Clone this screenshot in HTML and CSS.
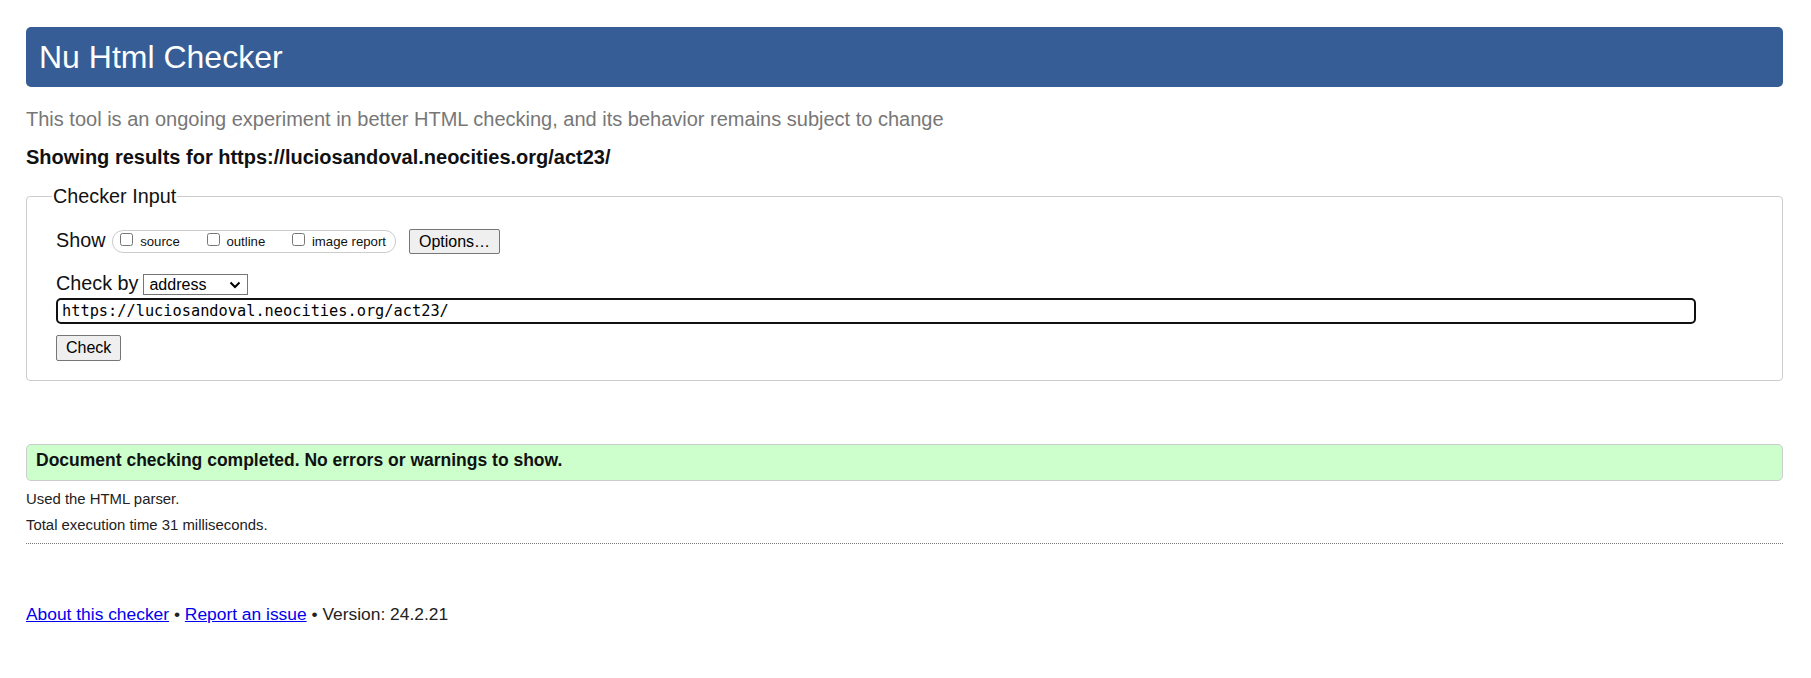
FILE: index.html
```html
<!DOCTYPE html>
<html lang="en">
<head>
<meta charset="utf-8">
<title>Nu Html Checker</title>
<link rel="stylesheet" href="styles.css">
</head>
<body>
<header class="masthead"><h1 class="title">Nu Html Checker</h1></header>
<p class="tagline">This tool is an ongoing experiment in better HTML checking, and its behavior remains subject to change</p>
<p class="results-for">Showing results for https://luciosandoval.neocities.org/act23/</p>
<form class="checker-form">
<fieldset class="checker">
<legend class="checker-legend">Checker Input</legend>
<div class="show-row">
<span class="show-label">Show</span>
<div class="show-opts"><label class="opt"><input type="checkbox" class="cb"> source</label><label class="opt"><input type="checkbox" class="cb"> outline</label><label class="opt last"><input type="checkbox" class="cb"> image report</label></div>
<button type="button" class="btn btn-options">Options…</button>
</div>
<div class="by-row">
<span class="by-label">Check by</span>
<span class="select-wrap"><select class="by-select"><option>address</option></select><svg class="chev" width="12" height="8" viewBox="0 0 12 8" aria-hidden="true"><path d="M1.5 1.5 L6 6 L10.5 1.5" fill="none" stroke="#000" stroke-width="2"/></svg></span>
</div>
<input class="url" type="text" value="https://luciosandoval.neocities.org/act23/">
<div class="submit-row"><button type="button" class="btn btn-check">Check</button></div>
</fieldset>
</form>
<div class="success">Document checking completed. No errors or warnings to show.</div>
<p class="meta first">Used the HTML parser.</p>
<p class="meta">Total execution time 31 milliseconds.</p>
<hr class="sep">
<p class="footer"><a class="flink" href="#">About this checker</a> • <a class="flink" href="#">Report an issue</a> • Version: 24.2.21</p>
</body>
</html>
```
FILE: styles.css
```css
html, body {
  background: #fff;
}
body {
  margin: 0;
  padding: 27px 28px 0 26px;
  font-family: "Liberation Sans", Arial, sans-serif;
  color: #111;
}
.masthead {
  height: 60px;
  background: #365d95;
  border-radius: 5px;
  display: flex;
  align-items: center;
  padding-left: 13px;
}
.title {
  margin: 0;
  font-size: 32px;
  font-weight: normal;
  line-height: 60px;
  color: #fff;
}
.tagline {
  margin: 20px 0 0;
  font-size: 20px;
  line-height: 24px;
  color: #777;
}
.results-for {
  margin: 14px 0 0;
  font-size: 20px;
  line-height: 24px;
  font-weight: bold;
}
.checker-form {
  margin: 15px 0 0;
}
.checker {
  margin: 0;
  padding: 21px 30px 19px 29px;
  border: 1px solid #ccc;
  border-radius: 4px;
  min-width: 0;
}
.checker-legend {
  font-size: 19.8px;
  line-height: 24px;
  padding: 0 1px;
  margin-left: -4px;
}
.show-row {
  display: flex;
  align-items: flex-start;
  height: 25px;
}
.show-label {
  font-size: 19.8px;
  line-height: 24px;
  margin-top: -1px;
}
.show-opts {
  height: 21px;
  margin: 1px 0 0 7px;
  padding: 0 9px 0 3px;
  border: 1px solid #ccc;
  border-radius: 11px;
  font-size: 13.2px;
  line-height: 21px;
  white-space: nowrap;
}
.opt {
  margin-right: 23px;
}
.opt.last {
  margin-right: 0;
}
.cb {
  width: 13px;
  height: 13px;
  margin: 0 3px 3px 4px;
  vertical-align: baseline;
}
.btn {
  font-family: "Liberation Sans", Arial, sans-serif;
  font-size: 16px;
  padding: 0 9px;
  border: 1px solid #767676;
  border-radius: 2px;
  background: #efefef;
  color: #000;
}
.btn-options {
  height: 25px;
  margin-left: 13px;
}
.btn-check {
  height: 26px;
}
.by-row {
  display: flex;
  align-items: flex-start;
  margin-top: 17px;
}
.by-label {
  font-size: 19.8px;
  line-height: 24px;
}
.select-wrap {
  position: relative;
  display: block;
  margin: 3px 0 0 5px;
  height: 21px;
}
.by-select {
  display: block;
  appearance: none;
  -webkit-appearance: none;
  margin: 0;
  width: 105px;
  height: 21px;
  padding: 0 0 0 5px;
  font-family: "Liberation Sans", Arial, sans-serif;
  font-size: 16px;
  border: 1px solid #767676;
  border-radius: 0;
  background: #fff;
  color: #000;
}
.chev {
  position: absolute;
  left: 86px;
  top: 7px;
  pointer-events: none;
}
.url {
  display: block;
  box-sizing: border-box;
  margin: 3px 0 0;
  width: calc(100% - 56px);
  height: 26px;
  padding: 0 4px;
  border: 2px solid #111;
  border-radius: 5px;
  font-family: "DejaVu Sans Mono", "Liberation Mono", monospace;
  font-size: 15.3px;
  color: #000;
  outline: none;
}
.submit-row {
  margin-top: 11px;
}
.success {
  margin-top: 63px;
  padding: 5px 9px 9px;
  border: 1px solid #ccc;
  border-radius: 5px;
  background: #ccffcc;
  font-size: 17.5px;
  line-height: 21px;
  font-weight: bold;
}
.meta {
  margin: 8px 0 0;
  font-size: 14.9px;
  line-height: 18px;
  color: #222;
}
.meta.first {
  margin-top: 9px;
}
.sep {
  margin: 9px 0 0;
  height: 0;
  border: 0;
  border-top: 1px dotted #777;
}
.footer {
  margin: 59px 0 0;
  font-size: 17.4px;
  line-height: 22px;
  color: #222;
}
.flink {
  color: #0000ee;
}
```
